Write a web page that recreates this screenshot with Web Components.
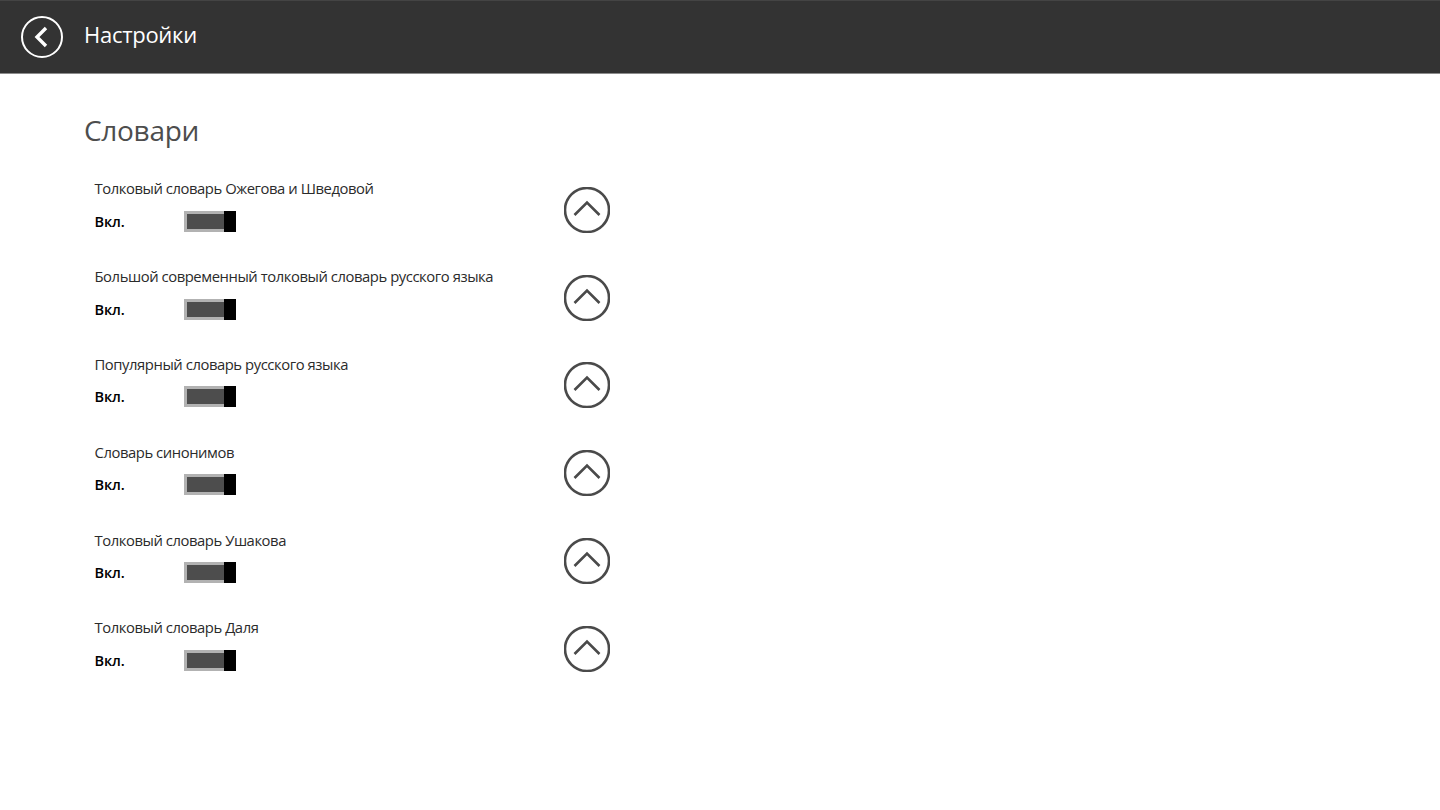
<!DOCTYPE html>
<html lang="ru">
<head>
<meta charset="utf-8">
<title>Настройки</title>
<style>
    html, body { margin: 0; padding: 0; background: #fff; height: 100%; overflow: hidden; }
    body { font-family: 'Open Sans', 'Noto Sans', sans-serif; }
</style>
</head>
<body>
<settings-page>
    <span slot="title">Настройки</span>
    <dict-section heading="Словари">
        <dict-row name="Толковый словарь Ожегова и Шведовой"></dict-row>
        <dict-row name="Большой современный толковый словарь русского языка"></dict-row>
        <dict-row name="Популярный словарь русского языка"></dict-row>
        <dict-row name="Словарь синонимов"></dict-row>
        <dict-row name="Толковый словарь Ушакова"></dict-row>
        <dict-row name="Толковый словарь Даля"></dict-row>
    </dict-section>
</settings-page>

<script>
class SettingsPage extends HTMLElement {
    constructor() {
        super();
        const shadow = this.attachShadow({ mode: 'open' });
        shadow.innerHTML = `
            <style>
                :host { display: flex; flex-direction: column; height: 810px; }
                .bar {
                    height: 74px;
                    box-sizing: border-box;
                    background: #333333;
                    border-top: 1px solid #444444;
                    border-bottom: 1px solid #8c8c8c;
                    display: flex;
                    align-items: center;
                    padding: 0 0 1px 21px;
                    color: #fff;
                }
                svg { display: block; margin-right: 21px; }
                .title { font-size: 22px; letter-spacing: -0.28px; line-height: 30px; padding-bottom: 6px; }
            </style>
            <div class="bar">
                <svg width="42" height="42" viewBox="0 0 42 42" fill="none" stroke="#fff">
                    <circle cx="21" cy="21" r="20" stroke-width="2"/>
                    <path d="M25 12 L16 21 L25 30" stroke-width="3.4"/>
                </svg>
                <div class="title"><slot name="title"></slot></div>
            </div>
            <slot></slot>
        `;
    }
}

class DictSection extends HTMLElement {
    constructor() {
        super();
        const shadow = this.attachShadow({ mode: 'open' });
        shadow.innerHTML = `
            <style>
                :host { display: block; padding: 35px 0 0 84px; }
                h2 {
                    margin: 0 0 15px;
                    font-size: 28px;
                    letter-spacing: -0.3px;
                    line-height: 42px;
                    font-weight: 400;
                    color: #4d4d4d;
                }
                .rows { display: grid; grid-auto-rows: 87.8px; padding-left: 11px; }
            </style>
            <h2></h2>
            <div class="rows"><slot></slot></div>
        `;
        shadow.querySelector('h2').textContent = this.getAttribute('heading');
    }
}

class DictRow extends HTMLElement {
    constructor() {
        super();
        const shadow = this.attachShadow({ mode: 'open' });
        shadow.innerHTML = `
            <style>
                :host {
                    display: grid;
                    grid-template-columns: 469px 46px;
                    align-items: center;
                    color: #2b2b2b;
                }
                .stack { padding-bottom: 10.5px; }
                .name { font-size: 14.8px; letter-spacing: -0.43px; line-height: 22px; margin-bottom: 11.5px; margin-left: -0.5px; }
                .state { display: flex; align-items: center; font-weight: 600; font-size: 14.5px; letter-spacing: -0.1px; color: #000; }
                .state span { width: 89px; margin-left: -0.5px; padding-right: 0.5px; }
                svg { display: block; }
            </style>
            <div class="stack">
                <div class="name"></div>
                <div class="state"><span>Вкл.</span><dict-toggle></dict-toggle></div>
            </div>
            <svg width="46" height="46" viewBox="0 0 46 46" fill="none" stroke="#4a4a4a">
                <circle cx="23" cy="23" r="22" stroke-width="2.6"/>
                <path d="M10.5 28 L23 15.5 L35.5 28" stroke-width="2.6"/>
            </svg>
        `;
        shadow.querySelector('.name').textContent = this.getAttribute('name');
    }
}

class DictToggle extends HTMLElement {
    constructor() {
        super();
        const shadow = this.attachShadow({ mode: 'open' });
        shadow.innerHTML = `
            <style>
                :host { display: flex; width: 52px; height: 21px; }
                .track {
                    flex: 1;
                    box-sizing: border-box;
                    background: #4d4d4d;
                    border: 3px solid #b2b2b2;
                    border-right: none;
                }
                .thumb { width: 12px; background: #000; }
            </style>
            <div class="track"></div>
            <div class="thumb"></div>
        `;
    }
}

customElements.define('settings-page', SettingsPage);
customElements.define('dict-section', DictSection);
customElements.define('dict-row', DictRow);
customElements.define('dict-toggle', DictToggle);
</script>
</body>
</html>
